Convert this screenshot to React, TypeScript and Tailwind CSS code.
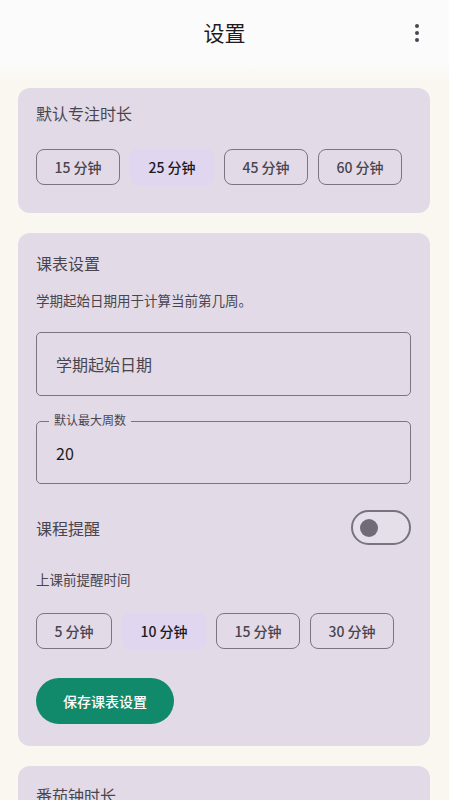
import React from "react";

const font = { fontFamily: '"Noto Sans CJK SC", "Noto Sans", sans-serif' };

function Chip({ label, selected, narrow }: { label: string; selected?: boolean; narrow?: boolean }) {
  return (
    <div
      className={
        "h-9 flex items-center justify-center rounded-lg text-[14px] font-medium whitespace-nowrap " +
        (narrow ? "w-[76px] " : "w-[84px] ") +
        (selected
          ? "bg-[#e0d6ef] text-[#1d1b20] border border-transparent"
          : "border border-[#7b7481] text-[#49454f]")
      }
    >
      {label}
    </div>
  );
}

export default function App() {
  return (
    <div className="w-[449px] h-[800px] overflow-hidden bg-[#faf6f0] flex flex-col" style={font}>
      <div className="h-[68px] shrink-0 bg-[#fbfbfb] flex items-center justify-center relative">
        <span className="text-[21px] text-[#1d1b20] leading-none -mt-[4px]">设置</span>
        <div className="absolute right-[30px] top-[24px] flex flex-col gap-[3px]">
          <span className="w-[4px] h-[4px] rounded-full bg-[#4a4550]" />
          <span className="w-[4px] h-[4px] rounded-full bg-[#4a4550]" />
          <span className="w-[4px] h-[4px] rounded-full bg-[#4a4550]" />
        </div>
      </div>
      <div className="h-[20px] shrink-0 bg-gradient-to-b from-[#fbfaf6] to-[#faf6f0]" />

      <div className="flex flex-col gap-5 ml-[18px] mr-[19px]">
        <div className="rounded-xl bg-[#e2dae6] pl-[18px] pr-[19px] pt-[14px] pb-[28px]">
          <div className="text-[16px] leading-[22px] text-[#49454f]">默认专注时长</div>
          <div className="mt-[25px] flex gap-[10px]">
            <Chip label="15 分钟" />
            <Chip label="25 分钟" selected />
            <Chip label="45 分钟" />
            <Chip label="60 分钟" />
          </div>
        </div>

        <div className="rounded-xl bg-[#e2dae6] pl-[18px] pr-[19px] pt-[19px] pb-[22px]">
          <div className="text-[16px] leading-[22px] text-[#49454f]">课表设置</div>
          <div className="mt-[16px] text-[13.5px] leading-[20px] text-[#49454f]">学期起始日期用于计算当前第几周。</div>
          <div className="mt-[22px] h-[64px] rounded-[5px] border-[1.5px] border-[#7b7481] flex items-center pl-[19px]">
            <span className="text-[16px] text-[#49454f]">学期起始日期</span>
          </div>
          <div className="mt-[25px] h-[63px] rounded-[5px] border-[1.5px] border-[#7b7481] flex items-center pl-[19px] relative">
            <span className="absolute left-[12px] -top-[11px] px-[5px] bg-[#e2dae6] text-[12px] leading-[18px] text-[#49454f]">默认最大周数</span>
            <span className="text-[16px] text-[#1d1b20]">20</span>
          </div>
          <div className="mt-[26px] flex items-center justify-between">
            <span className="text-[16px] text-[#49454f]">课程提醒</span>
            <div className="w-[60px] h-[35px] rounded-full border-2 border-[#79737f] bg-[#e5dfe9] flex items-center pl-[7px]">
              <span className="w-[18px] h-[18px] rounded-full bg-[#716b78]" />
            </div>
          </div>
          <div className="mt-[24px] text-[13.5px] leading-[20px] text-[#49454f]">上课前提醒时间</div>
          <div className="mt-[24px] flex gap-[10px]">
            <Chip label="5 分钟" narrow />
            <Chip label="10 分钟" selected />
            <Chip label="15 分钟" />
            <Chip label="30 分钟" />
          </div>
          <button className="mt-[29px] h-[46px] px-[27px] rounded-full bg-[#11896b] text-white text-[14px] font-medium">
            保存课表设置
          </button>
        </div>

        <div className="rounded-xl bg-[#e2dae6] pl-[18px] pr-[19px] pt-[18px] pb-[28px]">
          <div className="text-[16px] leading-[22px] text-[#49454f]">番茄钟时长</div>
        </div>
      </div>
    </div>
  );
}
